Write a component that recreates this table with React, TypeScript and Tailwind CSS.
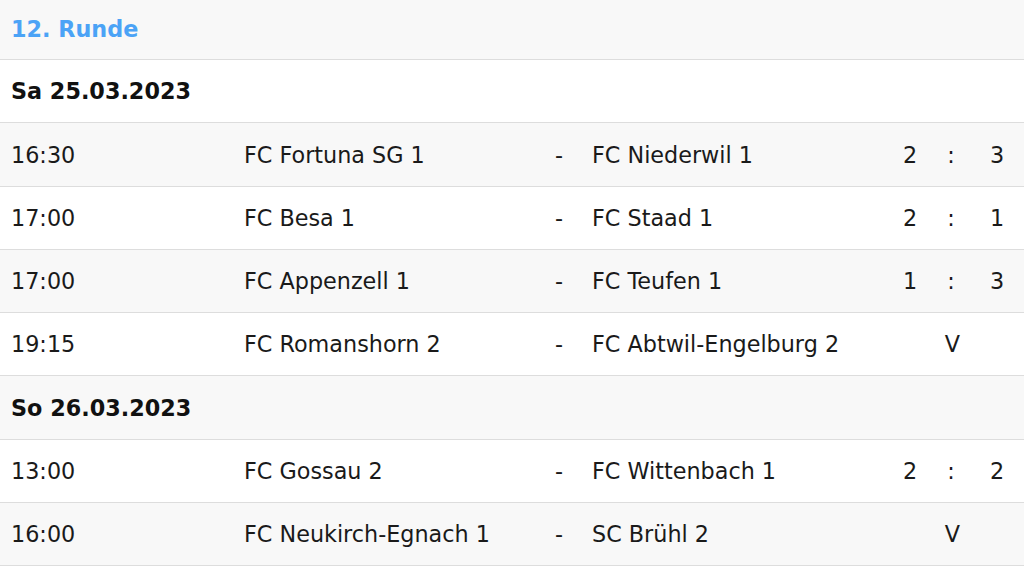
const matches1 = [
  { time: "16:30", home: "FC Fortuna SG 1", away: "FC Niederwil 1", score: ["2", "3"] },
  { time: "17:00", home: "FC Besa 1", away: "FC Staad 1", score: ["2", "1"] },
  { time: "17:00", home: "FC Appenzell 1", away: "FC Teufen 1", score: ["1", "3"] },
  { time: "19:15", home: "FC Romanshorn 2", away: "FC Abtwil-Engelburg 2", score: null },
];

const matches2 = [
  { time: "13:00", home: "FC Gossau 2", away: "FC Wittenbach 1", score: ["2", "2"] },
  { time: "16:00", home: "FC Neukirch-Egnach 1", away: "SC Brühl 2", score: null },
];

type Match = { time: string; home: string; away: string; score: string[] | null };

const rowBase = "h-[63.25px] border-t border-[#dddddd] pl-[11px] pt-[2px]";

const MatchRow = ({ m, grey }: { m: Match; grey: boolean }) => {
  return (
    <div
      className={`${rowBase} grid grid-cols-[233px_311px_37px_298px_40px_42px_50px] items-center text-[#1a1a1a] ${
        grey ? "bg-[#f8f8f8]" : "bg-white"
      }`}
    >
      <span>{m.time}</span>
      <span>{m.home}</span>
      <span>-</span>
      <span>{m.away}</span>
      {m.score ? (
        <>
          <span className="text-center">{m.score[0]}</span>
          <span className="text-center">:</span>
          <span className="text-center">{m.score[1]}</span>
        </>
      ) : (
        <>
          <span />
          <span className="text-center pl-[3px]">V</span>
          <span />
        </>
      )}
    </div>
  );
};

const DateRow = ({ label, grey }: { label: string; grey: boolean }) => (
  <div
    className={`${rowBase} flex items-center font-bold text-[#111] ${
      grey ? "bg-[#f8f8f8]" : "bg-white"
    }`}
  >
    {label}
  </div>
);

export default function App() {
  return (
    <div className="w-[1024px] h-[570px] overflow-hidden bg-white font-['DejaVu_Sans',sans-serif] text-[22.3px]">
      <div className="h-[59px] bg-[#f8f8f8] pl-[11px] flex items-center font-bold text-[#4ba3f6]">
        12. Runde
      </div>
      <DateRow label="Sa 25.03.2023" grey={false} />
      {matches1.map((m, i) => (
        <MatchRow key={i} m={m} grey={i % 2 === 0} />
      ))}
      <DateRow label="So 26.03.2023" grey />
      {matches2.map((m, i) => (
        <MatchRow key={i} m={m} grey={i % 2 === 1} />
      ))}
      <div className="border-t border-[#dddddd]" />
    </div>
  );
}
